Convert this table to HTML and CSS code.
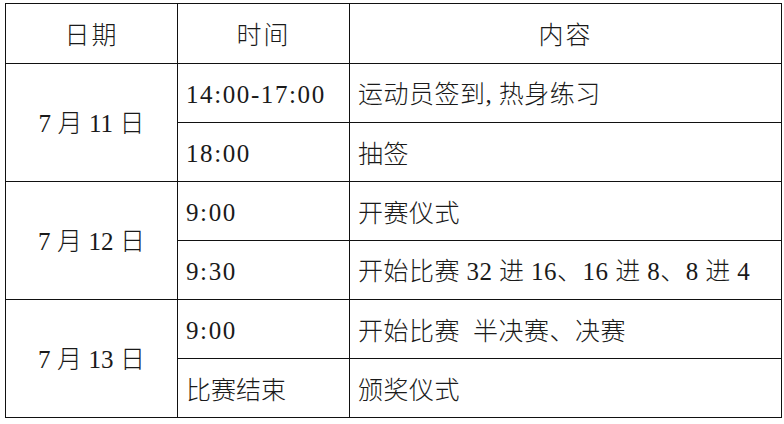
FILE: index.html
```html
<!DOCTYPE html>
<html lang="zh-CN">
<head>
<meta charset="utf-8">
<link rel="stylesheet" href="styles.css">
</head>
<body>
<table class="schedule">
  <colgroup>
    <col class="c-date">
    <col class="c-time">
    <col class="c-content">
  </colgroup>
  <thead>
    <tr class="head-row">
      <th>日期</th>
      <th>时间</th>
      <th>内容</th>
    </tr>
  </thead>
  <tbody>
    <tr class="row">
      <td class="date" rowspan="2"><span class="num">7</span> 月 <span class="num">11</span> 日</td>
      <td class="time"><span class="mono">14:00-17:00</span></td>
      <td class="content">运动员签到<span class="num">,</span> 热身练习</td>
    </tr>
    <tr class="row">
      <td class="time"><span class="mono">18:00</span></td>
      <td class="content">抽签</td>
    </tr>
    <tr class="row">
      <td class="date" rowspan="2"><span class="num">7</span> 月 <span class="num">12</span> 日</td>
      <td class="time"><span class="mono">9:00</span></td>
      <td class="content">开赛仪式</td>
    </tr>
    <tr class="row">
      <td class="time"><span class="mono">9:30</span></td>
      <td class="content">开始比赛 <span class="num">32</span> 进 <span class="num">16</span>、<span class="num">16</span> 进 <span class="num">8</span>、<span class="num">8</span> 进 <span class="num">4</span></td>
    </tr>
    <tr class="row">
      <td class="date" rowspan="2"><span class="num">7</span> 月 <span class="num">13</span> 日</td>
      <td class="time"><span class="mono">9:00</span></td>
      <td class="content">开始比赛&ensp;半决赛、决赛</td>
    </tr>
    <tr class="row">
      <td class="time">比赛结束</td>
      <td class="content">颁奖仪式</td>
    </tr>
  </tbody>
</table>
</body>
</html>
```

FILE: styles.css
```css
html, body {
  margin: 0;
  padding: 0;
  background: #ffffff;
}

body {
  padding: 3px 0 0 5px;
  font-family: "Noto Sans CJK SC", "Liberation Serif", serif;
  font-weight: 300;
  color: #1a1a1a;
  font-size: 25px;
}

.schedule {
  border-collapse: collapse;
  width: 776px;
  table-layout: fixed;
}

.c-date { width: 172px; }
.c-time { width: 172px; }
.c-content { width: 432px; }

.schedule th,
.schedule td {
  border: 1px solid #111;
  padding: 0 8px;
  vertical-align: middle;
  line-height: 1;
  white-space: nowrap;
}

.schedule th {
  font-weight: 300;
  text-align: center;
  letter-spacing: 2px;
}

.head-row { height: 60px; }
.row { height: 59px; }

.date {
  text-align: center;
  word-spacing: 1px;
}

.time,
.content {
  text-align: left;
}

.content {
  letter-spacing: 0.5px;
  word-spacing: 0.5px;
}

.num {
  font-family: "Liberation Serif", serif;
  font-weight: 400;
}

.mono {
  font-family: "Liberation Serif", serif;
  font-weight: 400;
  letter-spacing: 1.6px;
}
```
